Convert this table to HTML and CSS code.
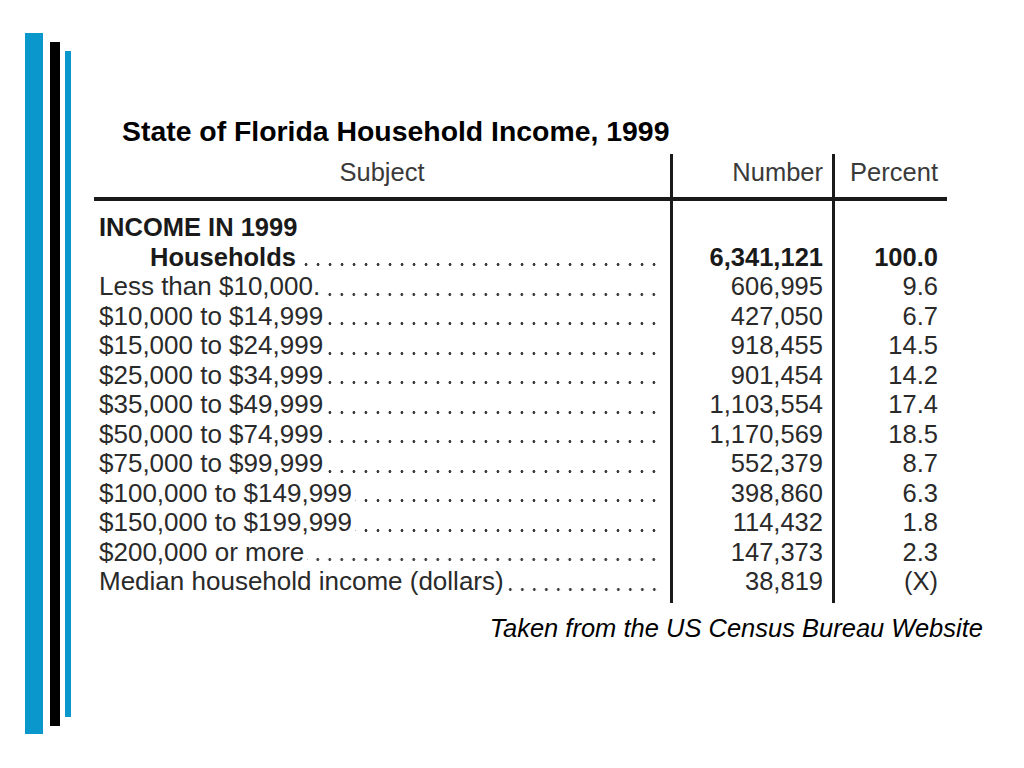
FILE: index.html
```html
<!DOCTYPE html>
<html>
<head>
<meta charset="utf-8">
<link rel="stylesheet" href="styles.css">
</head>
<body>
<div class="slide">
  <div class="bars">
    <div class="bar bar-wide"></div>
    <div class="bar bar-black"></div>
    <div class="bar bar-thin"></div>
  </div>
  <div class="content">
    <h1 class="title">State of Florida Household Income, 1999</h1>
    <div class="table">
      <div class="cell head subj">Subject</div>
      <div class="cell head num">Number</div>
      <div class="cell head pct">Percent</div>

      <div class="cell subj first bold">INCOME IN 1999</div>
      <div class="cell num first"></div>
      <div class="cell pct first"></div>

      <div class="cell subj bold indent"><span class="label">Households</span><span class="dots"></span></div>
      <div class="cell num bold">6,341,121</div>
      <div class="cell pct bold">100.0</div>

      <div class="cell subj"><span class="label">Less than $10,000.</span><span class="dots"></span></div>
      <div class="cell num">606,995</div>
      <div class="cell pct">9.6</div>

      <div class="cell subj"><span class="label">$10,000 to $14,999</span><span class="dots"></span></div>
      <div class="cell num">427,050</div>
      <div class="cell pct">6.7</div>

      <div class="cell subj"><span class="label">$15,000 to $24,999</span><span class="dots"></span></div>
      <div class="cell num">918,455</div>
      <div class="cell pct">14.5</div>

      <div class="cell subj"><span class="label">$25,000 to $34,999</span><span class="dots"></span></div>
      <div class="cell num">901,454</div>
      <div class="cell pct">14.2</div>

      <div class="cell subj"><span class="label">$35,000 to $49,999</span><span class="dots"></span></div>
      <div class="cell num">1,103,554</div>
      <div class="cell pct">17.4</div>

      <div class="cell subj"><span class="label">$50,000 to $74,999</span><span class="dots"></span></div>
      <div class="cell num">1,170,569</div>
      <div class="cell pct">18.5</div>

      <div class="cell subj"><span class="label">$75,000 to $99,999</span><span class="dots"></span></div>
      <div class="cell num">552,379</div>
      <div class="cell pct">8.7</div>

      <div class="cell subj"><span class="label">$100,000 to $149,999</span><span class="dots"></span></div>
      <div class="cell num">398,860</div>
      <div class="cell pct">6.3</div>

      <div class="cell subj"><span class="label">$150,000 to $199,999</span><span class="dots"></span></div>
      <div class="cell num">114,432</div>
      <div class="cell pct">1.8</div>

      <div class="cell subj"><span class="label">$200,000 or more</span><span class="dots"></span></div>
      <div class="cell num">147,373</div>
      <div class="cell pct">2.3</div>

      <div class="cell subj last"><span class="label">Median household income (dollars)</span><span class="dots"></span></div>
      <div class="cell num last">38,819</div>
      <div class="cell pct last">(X)</div>
    </div>
    <p class="caption">Taken from the US Census Bureau Website</p>
  </div>
</div>
</body>
</html>
```

FILE: styles.css
```css
html, body {
  margin: 0;
  padding: 0;
  background: #ffffff;
}

.slide {
  display: flex;
  width: 1024px;
  height: 768px;
  overflow: hidden;
  font-family: "Liberation Sans", Arial, Helvetica, sans-serif;
}

.bars {
  display: flex;
  align-items: flex-start;
  padding-left: 25px;
  flex: 0 0 auto;
}

.bar-wide {
  width: 18px;
  height: 701px;
  margin-top: 33px;
  background: #0a98cc;
}

.bar-black {
  width: 10px;
  height: 684px;
  margin-top: 42px;
  margin-left: 7px;
  background: #000000;
}

.bar-thin {
  width: 6px;
  height: 666px;
  margin-top: 51px;
  margin-left: 5px;
  background: #0a98cc;
}

.content {
  flex: 1 1 auto;
  padding-left: 23px;
  padding-top: 115px;
}

.title {
  margin: 0 0 7px 28px;
  font-size: 28.4px;
  line-height: 32px;
  font-weight: bold;
  color: #000000;
}

.table {
  display: grid;
  grid-template-columns: 576px 162px 115px;
  width: 853px;
  color: #2a2a2a;
  font-size: 25.5px;
  line-height: 29.5px;
}

.cell {
  white-space: nowrap;
}

.head {
  line-height: 36px;
  padding-bottom: 7px;
  border-bottom: 4px solid #1a1a1a;
  color: #3a3a3a;
}

.subj {
  display: flex;
  padding-left: 5px;
  padding-right: 10px;
  font-size: 26px;
}

.head.subj {
  display: block;
  text-align: center;
  padding: 0 0 7px 0;
  font-size: 25.5px;
}

.num {
  border-left: 3px solid #1a1a1a;
  text-align: right;
  padding-right: 9px;
}

.pct {
  border-left: 3px solid #1a1a1a;
  text-align: right;
  padding-right: 9px;
}

.first {
  padding-top: 12px;
}

.last {
  padding-bottom: 6px;
}

.bold {
  font-weight: bold;
  color: #1a1a1a;
}

.subj.bold {
  font-size: 25.5px;
}

.indent {
  padding-left: 56px;
}

.label {
  flex: 0 0 auto;
}

.dots {
  flex: 1 1 auto;
  align-self: flex-end;
  height: 3px;
  margin-bottom: 6px;
  margin-left: 3px;
  background-image: radial-gradient(circle, #3a3a3a 1.2px, rgba(0,0,0,0) 1.7px);
  background-size: 12px 3px;
  background-repeat: repeat-x;
  background-position: right center;
}

.caption {
  margin: 10px 0 0 0;
  padding-right: 41px;
  text-align: right;
  font-size: 25.5px;
  line-height: 30px;
  font-style: italic;
  color: #000000;
}
```
